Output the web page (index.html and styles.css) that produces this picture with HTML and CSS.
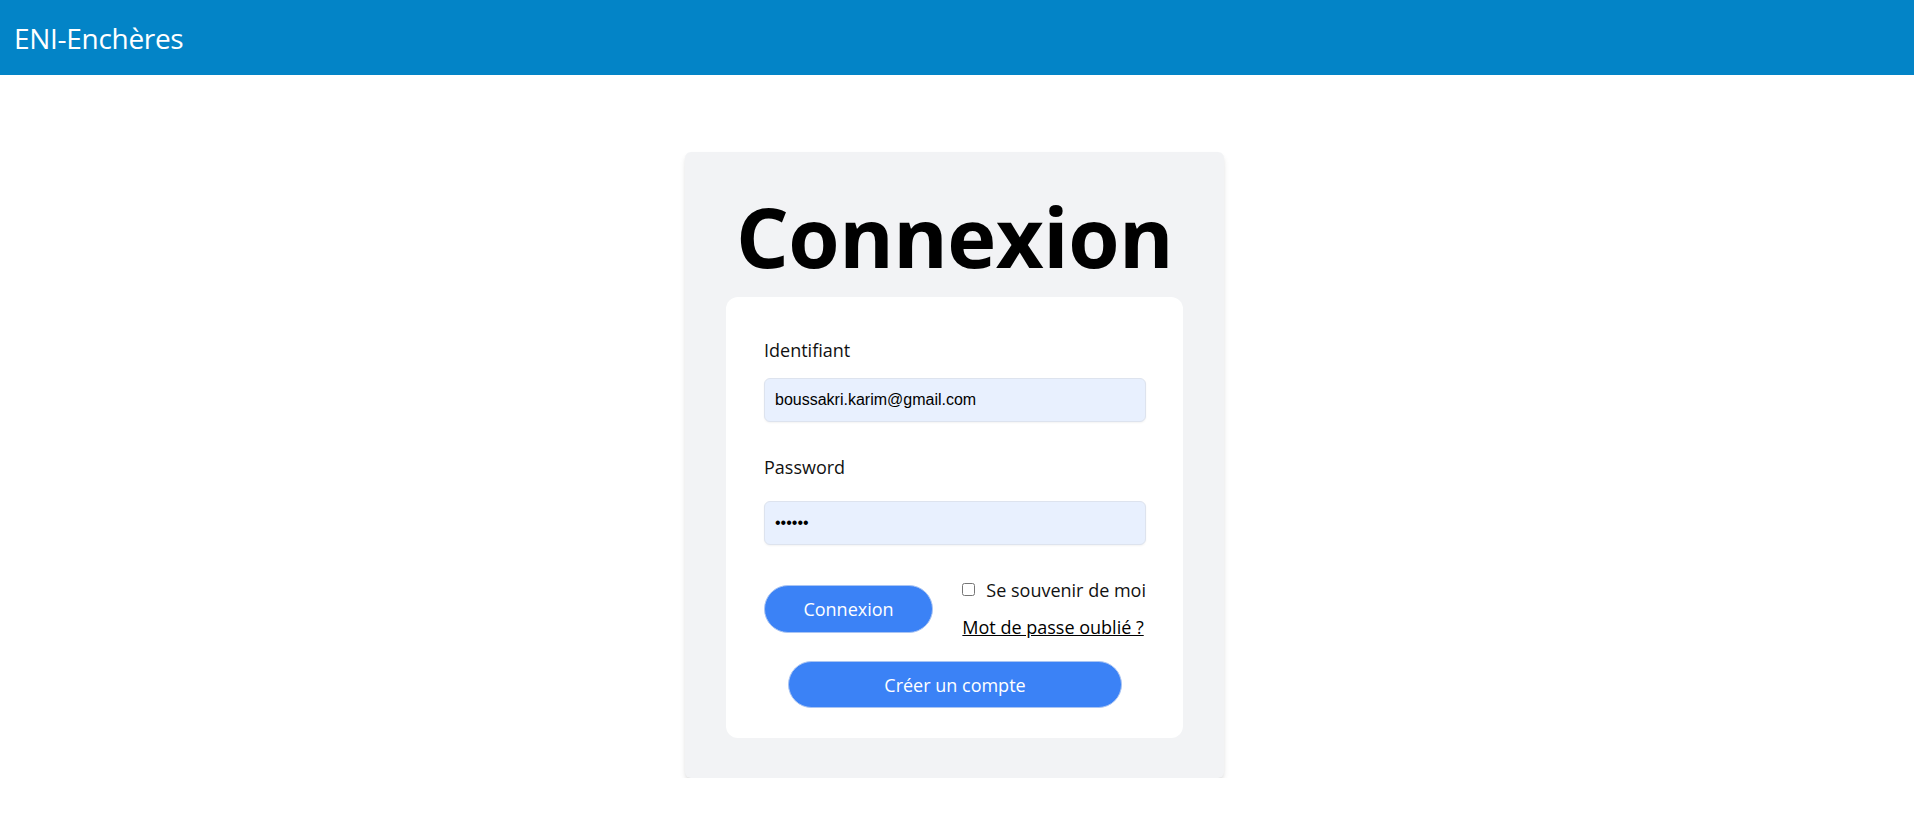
FILE: index.html
```html
<!DOCTYPE html>
<html lang="fr">
<head>
<meta charset="utf-8">
<title>Connexion - ENI-Enchères</title>
<link rel="stylesheet" href="styles.css">
</head>
<body>
<header class="topbar">
  <span class="brand">ENI-Enchères</span>
</header>
<main class="page">
  <section class="card">
    <h1 class="title">Connexion</h1>
    <form class="panel">
      <label class="label label-first" for="login">Identifiant</label>
      <input class="field field-first" id="login" type="text" value="boussakri.karim@gmail.com">
      <label class="label label-second" for="pwd">Password</label>
      <input class="field field-second" id="pwd" type="password" value="secret">
      <div class="actions">
        <button class="btn btn-login" type="button">Connexion</button>
        <div class="side">
          <label class="remember"><input class="check" type="checkbox"><span>Se souvenir de moi</span></label>
          <a class="forgot" href="#">Mot de passe oublié ?</a>
        </div>
      </div>
      <button class="btn btn-create" type="button">Créer un compte</button>
    </form>
  </section>
</main>
</body>
</html>
```

FILE: styles.css
```css
html, body {
  margin: 0;
  padding: 0;
  background: #ffffff;
}

body {
  font-family: "Open Sans", "Noto Sans", sans-serif;
  color: #000;
}

.topbar {
  height: 75px;
  background: #0384c7;
  display: flex;
  align-items: center;
  padding-left: 14px;
}

.brand {
  color: #ffffff;
  font-size: 28px;
  line-height: 36px;
  letter-spacing: -0.3px;
}

.page {
  display: flex;
  justify-content: center;
  padding-top: 77px;
  padding-right: 5px;
}

.card {
  box-sizing: border-box;
  width: 539px;
  background: #f2f3f5;
  border-radius: 6px;
  padding: 43px 41px 40px 41px;
  box-shadow: 0 4px 6px -1px rgba(0, 0, 0, 0.12), 0 2px 4px -2px rgba(0, 0, 0, 0.1);
}

.title {
  margin: 0 0 20px 0;
  text-align: center;
  font-size: 83px;
  line-height: 82px;
  font-weight: 700;
  letter-spacing: -0.5px;
}

.panel {
  background: #ffffff;
  border-radius: 12px;
  padding: 40px 37px 30px 38px;
  display: flex;
  flex-direction: column;
}

.label {
  display: block;
  font-size: 18px;
  line-height: 27px;
  color: #111;
}

.label-first {
  margin-bottom: 14px;
}

.label-second {
  margin-bottom: 20px;
}

.field {
  box-sizing: border-box;
  width: 100%;
  height: 44px;
  margin: 0;
  padding: 0 10px;
  border: 1px solid #dde3ee;
  border-radius: 6px;
  background: #e8f0fe;
  font-family: "Liberation Sans", Arial, sans-serif;
  font-size: 16px;
  color: #000;
  box-shadow: 0 1px 2px rgba(0, 0, 0, 0.05);
  outline: none;
}

.field-first {
  margin-bottom: 32px;
}

.field-second {
  margin-bottom: 32px;
}

.actions {
  display: flex;
  justify-content: space-between;
  align-items: center;
  margin-bottom: 20px;
}

.btn {
  box-sizing: border-box;
  border: 1px solid #a9c4f3;
  background: #3b82f6;
  color: #ffffff;
  font-family: "Open Sans", "Noto Sans", sans-serif;
  font-size: 18px;
  border-radius: 999px;
  cursor: pointer;
  padding: 0;
}

.btn-login {
  width: 169px;
  height: 48px;
}

.side {
  display: flex;
  flex-direction: column;
  align-items: flex-start;
  gap: 10px;
}

.remember {
  display: flex;
  align-items: center;
  gap: 11px;
  font-size: 18px;
  line-height: 27px;
  color: #111;
}

.check {
  margin: 0;
  width: 13px;
  height: 13px;
  position: relative;
  top: -1px;
}

.forgot {
  font-size: 18px;
  line-height: 27px;
  color: #000;
  text-decoration: underline;
}

.btn-create {
  width: 334px;
  height: 47px;
  align-self: center;
}
```
